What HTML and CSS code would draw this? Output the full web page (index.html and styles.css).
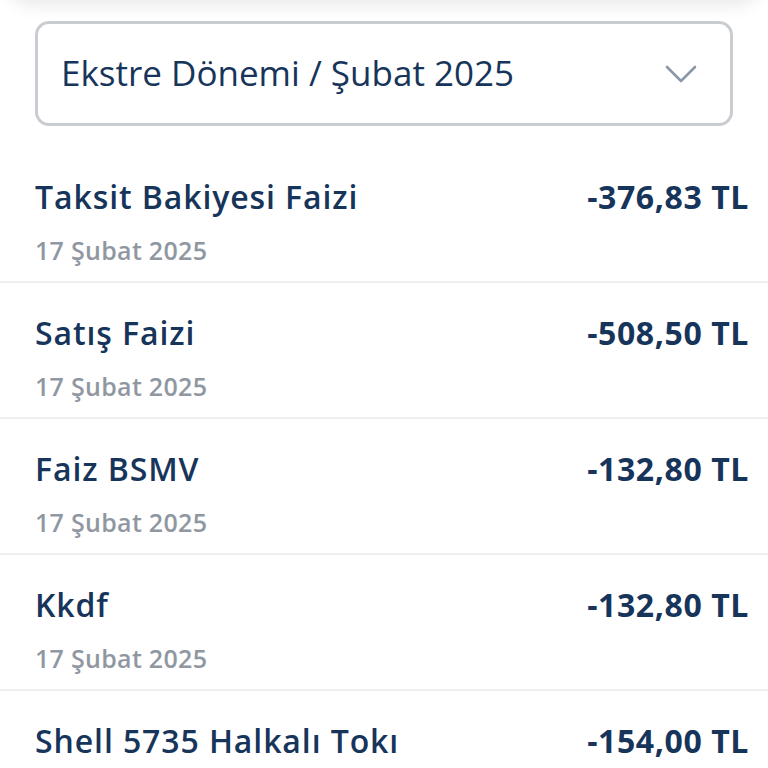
FILE: index.html
```html
<!DOCTYPE html>
<html lang="tr">
<head>
<meta charset="utf-8">
<link rel="stylesheet" href="styles.css">
</head>
<body>
<div class="topbar"></div>
<div class="select-wrap">
  <div class="select">
    <span class="select-label">Ekstre Dönemi / Şubat 2025</span>
    <svg class="chev" width="32" height="20" viewBox="0 0 32 20"><path d="M2 3 L16 17 L30 3" fill="none" stroke="#8a97a6" stroke-width="2.6" stroke-linecap="round" stroke-linejoin="round"/></svg>
  </div>
</div>
<ul class="list">
  <li class="row"><div class="info"><div class="title">Taksit Bakiyesi Faizi</div><div class="date">17 Şubat 2025</div></div><div class="amount">-376,83 TL</div></li>
  <li class="row"><div class="info"><div class="title">Satış Faizi</div><div class="date">17 Şubat 2025</div></div><div class="amount">-508,50 TL</div></li>
  <li class="row"><div class="info"><div class="title">Faiz BSMV</div><div class="date">17 Şubat 2025</div></div><div class="amount">-132,80 TL</div></li>
  <li class="row"><div class="info"><div class="title">Kkdf</div><div class="date">17 Şubat 2025</div></div><div class="amount">-132,80 TL</div></li>
  <li class="row"><div class="info"><div class="title">Shell 5735 Halkalı Tokı</div></div><div class="amount">-154,00 TL</div></li>
</ul>
</body>
</html>
```
FILE: styles.css
```css
html, body { margin: 0; padding: 0; background: #fff; }
body { font-family: "Open Sans", "Noto Sans", sans-serif; color: #17355a; width: 768px; height: 768px; overflow: hidden; position: relative; }
.topbar { position: absolute; left: 10px; right: 10px; top: -40px; height: 40px; background: #fff; box-shadow: 0 4px 18px rgba(0,0,0,0.10); border-radius: 0 0 20px 20px; }
.select-wrap { padding: 21px 35px 0 35px; }
.select { height: 99px; border: 3px solid #c9cdd2; border-radius: 14px; display: flex; align-items: center; justify-content: space-between; padding: 0 33px 0 23px; }
.select-label { font-size: 35px; color: #17355a; margin-top: -2px; }
.chev { display: block; margin-top: 0; }
.list { list-style: none; margin: 21px 0 0 0; padding: 0; }
.row { display: flex; justify-content: space-between; align-items: flex-start; padding: 29px 19px 15px 35px; border-bottom: 2px solid #eeeff1; }
.title { font-size: 32px; line-height: 42px; font-weight: 550; letter-spacing: 0.9px; color: #17355a; }
.date { font-size: 25px; line-height: 32px; margin-top: 16px; font-weight: 600; letter-spacing: 0.3px; color: #8f97a1; }
.amount { font-size: 32px; font-weight: 700; line-height: 42px; letter-spacing: 0.6px; color: #17355a; }
```
